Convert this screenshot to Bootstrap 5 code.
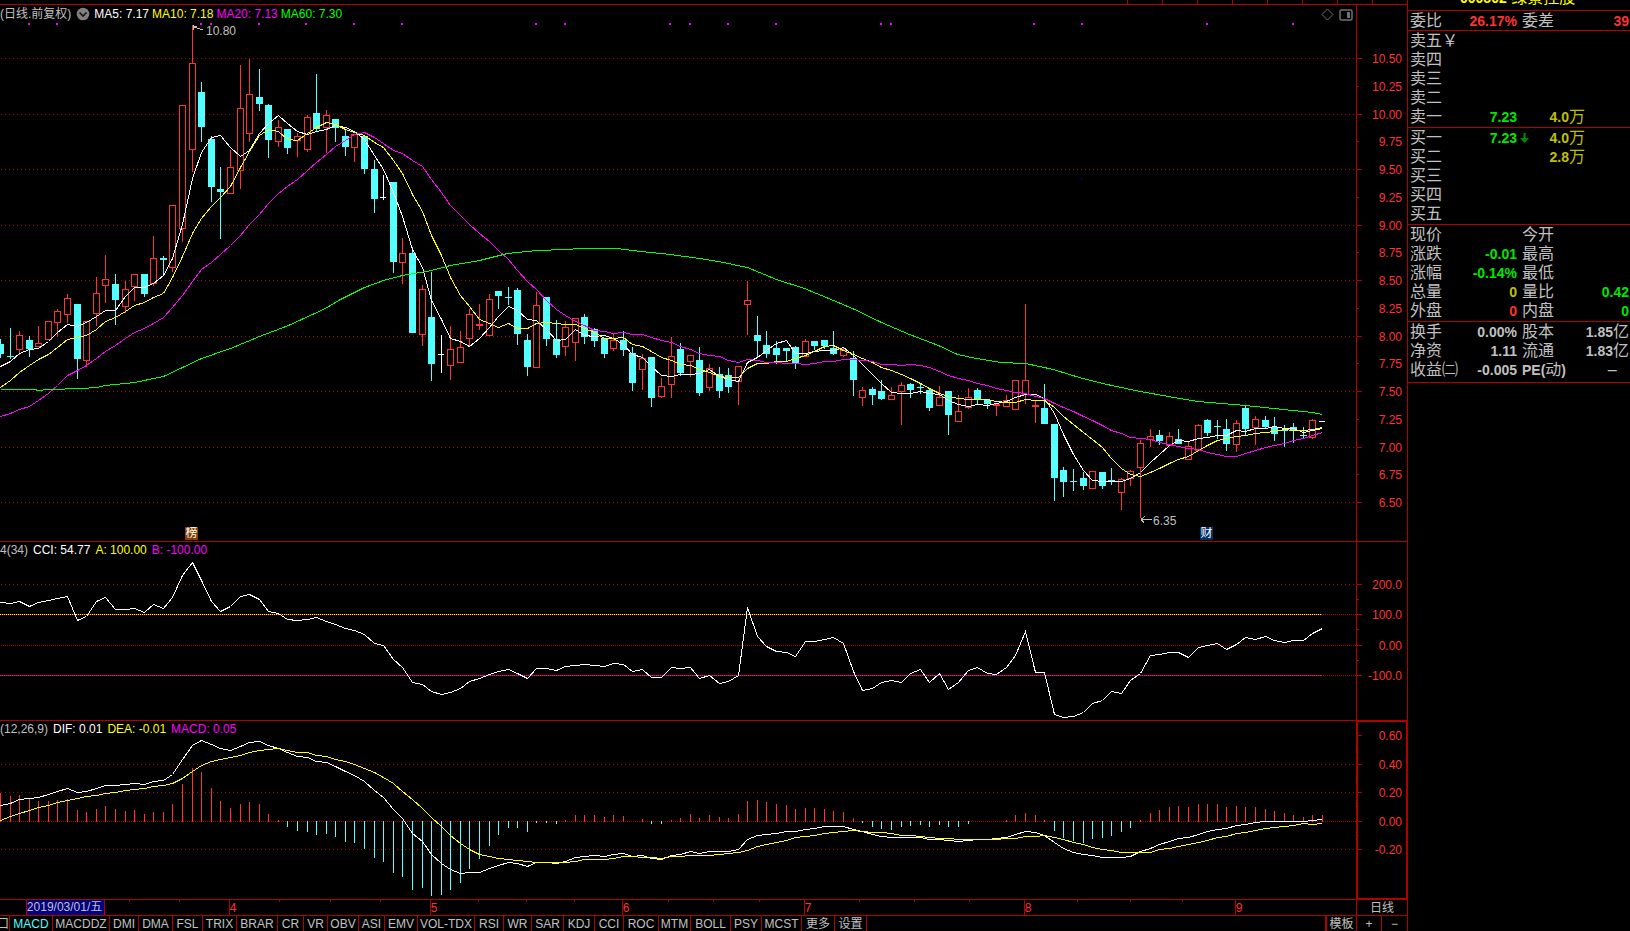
<!DOCTYPE html>
<html lang="zh-CN" data-bs-theme="dark">
<head>
<meta charset="utf-8">
<meta name="viewport" content="width=device-width, initial-scale=1">
<title>000502 绿景控股 日线</title>
<link href="https://cdn.jsdelivr.net/npm/bootstrap@5.3.0/dist/css/bootstrap.min.css" rel="stylesheet">
<style>
:root{--rule:#b00000;--up:#ff3232;--down:#54ffff;--ink:#c0c0c0}
body{background:#000;color:var(--ink);font:12px/16px "Liberation Sans","Noto Sans CJK SC",sans-serif}
.c-up{color:var(--up)}.c-green{color:#00e600}.c-vol{color:#c0c000}
.c-y{color:#ff0}.c-m{color:#f0f}.c-g{color:#0f0}
.desk{border-right:1px solid var(--rule);display:grid;grid-template-rows:4px minmax(0,537fr) minmax(0,179fr) minmax(0,179fr) 16px 16px}
.desk>div{border-top:1px solid var(--rule);min-height:0}
.desk>.topstrip{border:0}
.topstrip i{width:35px;border-left:1px solid var(--rule)}
.plot{min-width:0;overflow:hidden}
.plot svg{position:absolute;inset:0;width:100%;height:100%}
.legend{position:absolute;left:0;top:0;z-index:2;white-space:nowrap;line-height:16px;gap:5px}
.legend.tall{line-height:18px;gap:3px}
.tools{position:absolute;right:3px;top:3px;z-index:2;gap:5px}
.tools button,.fold{border:0;background:none;padding:0;line-height:0}
.fold{margin:0 1px 0 2px}
.note,.flag{position:absolute;z-index:2;line-height:14px}
.flag{width:13px;height:13px;line-height:12px;color:#fff;text-align:center;overflow:hidden}
.flag-rank{background:#804000}.flag-fin{background:#003068}
.scale{width:51px;flex:none;border-left:1px solid var(--rule);color:var(--up)}
.scale span{display:block;height:16px;line-height:16px;padding-right:5px;text-align:right;position:relative}
.scale span::before{content:"";position:absolute;left:0;top:7px;width:5px;height:1px;background:var(--rule)}
.scale .minor::before{width:2px}
.scale-main{padding:46px 0 30px}
.scale-cci{padding:39px 0 40px}
.scale-macd{padding:11px 0 45px;box-shadow:inset 0 0 0 1px var(--rule)}
.scale-cci span,.scale-macd span{margin:-4px 0}
.months span{position:relative;z-index:1;border-left:1px solid var(--rule);color:var(--up);line-height:16px;flex-basis:0;min-width:0;white-space:nowrap}
.months span:first-of-type{border:0}
.months mark{position:absolute;left:0;top:0;padding:0;background:#000080;color:var(--ink);line-height:15px;height:15px;border-right:1px solid var(--rule);width:78px}
.tabs{display:grid;grid-template-columns:10px 43px 57px 29px 34px 30px 34px 41px 26px 24px 31px 26px 33px 57px 29px 28px 32px 31px 29px 35px 32px 40px 31px 40px 33px 32px 1fr 32px 25px 25px}
.tabs button{border:0;border-right:1px solid var(--rule);background:none;color:var(--ink);padding:0;line-height:16px;height:15px;white-space:nowrap;overflow:hidden;min-width:0}
.tabs button.on{color:var(--down)}
.tabs .clip{direction:rtl}
.tabs .tpl{border-left:2px solid var(--rule)}
.tabs button:last-child{border-right:0}
.side{width:222px;flex:none;overflow:hidden}
.side h1{height:10px;margin:0;padding-left:52px;font-size:16px;line-height:16px;overflow:hidden;color:#ff0;display:flex;align-items:flex-end;font-weight:400;white-space:nowrap}
.side h1 span{display:block;margin-bottom:4px}
.side b{font-size:14px;line-height:0}
.side section{border-top:1px solid var(--rule);padding-left:2px}
.side .book,.side .facts{padding-bottom:1px}
.side .last{padding-bottom:3px;border-bottom:1px solid var(--rule)}
.quote{width:100%;table-layout:fixed;border-collapse:collapse;font-size:16px}
.quote th,.quote td{height:19px;padding:0;line-height:19px;font-weight:400;white-space:nowrap;vertical-align:top}
.quote td{text-align:right}
.quote .second{padding-left:5px}
.quote td:last-child{padding-right:1px}
.quote svg{margin-top:5px}
.w-label{width:50px}.w-val{width:57px}.w-second{width:53px}.w-arrow{width:14px}.w-vol{width:54px}
</style>
</head>
<body>
<div class="d-flex vh-100 overflow-hidden">
  <main class="desk flex-grow-1">
    <div class="topstrip d-flex justify-content-end"><i></i><i></i><i></i><i></i><i></i><i></i><i></i><i></i></div>

    <div class="d-flex">
      <div class="plot position-relative flex-grow-1" id="price">
        <div class="legend tall d-flex align-items-center">
          <span>(日线.前复权)</span>
          <button class="fold" aria-label="折叠"><svg class="position-static" style="width:14px;height:14px" viewBox="0 0 14 14"><circle cx="7" cy="7" r="6.3" fill="#808080"/><path d="M3.5 5.5 7 9l3.5-3.5" fill="none" stroke="#111" stroke-width="1.6"/></svg></button>
          <span class="text-white">MA5: 7.17</span><span class="c-y">MA10: 7.18</span><span class="c-m">MA20: 7.13</span><span class="c-g">MA60: 7.30</span>
        </div>
        <div class="tools d-flex">
          <button aria-label="标记"><svg class="position-static" style="width:13px;height:13px" viewBox="0 0 13 13"><path d="M6.500 1 12 6.500 6.500 12 1 6.500Z" fill="none" stroke="#707070"/></svg></button>
          <button aria-label="侧栏"><svg class="position-static" style="width:14px;height:12px" viewBox="0 0 14 12"><rect x="1" y="1" width="12" height="10" rx="1.500" fill="none" stroke="#707070" stroke-width="1.500"/><path d="M8 3h3v6H8z" fill="#707070"/></svg></button>
        </div>
      </div>
      <div class="scale scale-main d-flex flex-column justify-content-between" id="scale"></div>
    </div>

    <div class="d-flex">
      <div class="plot position-relative flex-grow-1" id="cci">
        <div class="legend d-flex"><span>4(34)</span><span class="text-white">CCI: 54.77</span><span class="c-y">A: 100.00</span><span class="c-m">B: -100.00</span></div>
      </div>
      <div class="scale scale-cci d-flex flex-column justify-content-between">
        <span>200.0</span><span class="minor"></span><span>100.0</span><span class="minor"></span><span>0.00</span><span class="minor"></span><span>-100.0</span>
      </div>
    </div>

    <div class="d-flex">
      <div class="plot position-relative flex-grow-1" id="macd">
        <div class="legend d-flex"><span>(12,26,9)</span><span class="text-white">DIF: 0.01</span><span class="c-y">DEA: -0.01</span><span class="c-m">MACD: 0.05</span></div>
      </div>
      <div class="scale scale-macd d-flex flex-column justify-content-between">
        <span>0.60</span><span class="minor"></span><span>0.40</span><span class="minor"></span><span>0.20</span><span class="minor"></span><span>0.00</span><span class="minor"></span><span>-0.20</span>
      </div>
    </div>

    <div class="d-flex">
      <div class="plot months position-relative flex-grow-1 d-flex" id="months"></div>
      <div class="scale text-center" style="color:var(--ink)">日线</div>
    </div>

    <div class="tabs" id="tabs"></div>
  </main>

  <aside class="side">
    <h1><span><b>000502</b> 绿景控股</span></h1>
    <section>
      <table class="quote"><colgroup><col class="w-label"><col class="w-val"><col class="w-second"><col></colgroup>
        <tr><th>委比</th><td class="c-up"><b>26.17%</b></td><th class="second">委差</th><td class="c-up"><b>39</b></td></tr>
      </table>
    </section>
    <section class="book">
      <table class="quote"><colgroup><col class="w-label"><col class="w-val"><col class="w-arrow"><col class="w-vol"><col></colgroup>
        <tr><th>卖五￥</th><td></td><td></td><td></td><td></td></tr>
        <tr><th>卖四</th><td></td><td></td><td></td><td></td></tr>
        <tr><th>卖三</th><td></td><td></td><td></td><td></td></tr>
        <tr><th>卖二</th><td></td><td></td><td></td><td></td></tr>
        <tr><th>卖一</th><td class="c-green"><b>7.23</b></td><td></td><td class="c-vol"><b>4.0</b>万</td><td></td></tr>
      </table>
    </section>
    <section class="book">
      <table class="quote"><colgroup><col class="w-label"><col class="w-val"><col class="w-arrow"><col class="w-vol"><col></colgroup>
        <tr><th>买一</th><td class="c-green"><b>7.23</b></td><td><svg class="d-block mx-auto" width="9" height="10" viewBox="0 0 9 10"><path d="M3.500 0h2v5H9L4.500 10 0 5h3.500z" fill="#008a00"/></svg></td><td class="c-vol"><b>4.0</b>万</td><td></td></tr>
        <tr><th>买二</th><td></td><td></td><td class="c-vol"><b>2.8</b>万</td><td></td></tr>
        <tr><th>买三</th><td></td><td></td><td></td><td></td></tr>
        <tr><th>买四</th><td></td><td></td><td></td><td></td></tr>
        <tr><th>买五</th><td></td><td></td><td></td><td></td></tr>
      </table>
    </section>
    <section class="facts">
      <table class="quote"><colgroup><col class="w-label"><col class="w-val"><col class="w-second"><col></colgroup>
        <tr><th>现价</th><td></td><th class="second">今开</th><td></td></tr>
        <tr><th>涨跌</th><td class="c-green"><b>-0.01</b></td><th class="second">最高</th><td></td></tr>
        <tr><th>涨幅</th><td class="c-green"><b>-0.14%</b></td><th class="second">最低</th><td></td></tr>
        <tr><th>总量</th><td class="c-vol"><b>0</b></td><th class="second">量比</th><td class="c-green"><b>0.42</b></td></tr>
        <tr><th>外盘</th><td class="c-up"><b>0</b></td><th class="second">内盘</th><td class="c-green"><b>0</b></td></tr>
      </table>
    </section>
    <section class="last">
      <table class="quote"><colgroup><col class="w-label"><col class="w-val"><col class="w-second"><col></colgroup>
        <tr><th>换手</th><td><b>0.00%</b></td><th class="second">股本</th><td><b>1.85</b>亿</td></tr>
        <tr><th>净资</th><td><b>1.11</b></td><th class="second">流通</th><td><b>1.83</b>亿</td></tr>
        <tr><th>收益㈡</th><td><b>-0.005</b></td><th class="second"><b>PE(</b>动<b>)</b></th><td><span class="me-2">–</span>&nbsp;</td></tr>
      </table>
    </section>
  </aside>
</div>
<script src="https://cdn.jsdelivr.net/npm/bootstrap@5.3.0/dist/js/bootstrap.bundle.min.js"></script>
<script>
// Each bar: direction (r up, c down, w flat), high, low, body top, body bottom.
const bars = `c339 358 344 354|c328 359 356 357|r331 355 335 349|c336 357 340 349|r326 346 343 346|r321 339 321 339|r309 337 311 322|r294 323 298 314|c304 379 304 359|r321 367 321 360
r277 326 293 313|r255 303 279 285|c274 325 284 300|r281 313 289 306|r274 301 274 286|c274 297 274 294|r236 286 258 283|c256 276 258 260|r205 272 205 267|r105 242 105 228
r25 172 63 149|c82 142 92 127|c136 202 139 187|c167 239 189 192|r150 193 167 193|r65 189 108 170|r59 142 94 133|c69 111 97 104|c104 158 105 140|r120 147 127 141
c129 154 129 148|r133 157 136 140|r115 152 117 149|c74 132 113 129|r110 153 115 127|c119 142 119 128|c130 156 136 147|r134 162 134 147|c135 174 136 169|c160 213 169 199
w175 200 197 197|c182 273 182 262|r238 284 253 262|c247 333 253 333|r285 346 289 334|c272 381 317 364|w335 373 354 354|r326 380 349 365|r331 362 347 362|r309 347 314 338
r304 330 324 325|r294 335 299 335|c291 309 291 296|c287 305 297 298|c288 345 290 334|c334 376 340 367|r292 367 305 367|c297 346 297 339|c320 358 339 355|r321 356 327 346
r318 361 318 342|c314 344 317 337|c328 347 329 341|c338 358 338 354|r334 351 340 348|c331 356 340 350|c347 391 353 383|r354 390 358 369|c357 407 357 398|r378 398 386 396
r337 398 356 384|c343 376 349 373|r355 377 355 361|c347 396 360 393|r364 391 368 387|c367 398 374 391|c368 393 375 387|r366 405 366 381|r281 335 300 304|c316 357 335 341
c331 358 345 354|c341 364 348 355|c348 362 348 351|c346 369 347 364|r339 356 341 356|c341 350 341 346|c340 349 340 346|c331 355 348 354|r347 357 350 355|c351 396 358 380
r387 406 390 397|c387 405 389 395|c380 400 391 399|r387 399 395 399|r382 425 385 391|c383 398 384 390|c383 394 387 388|c388 411 390 408|r386 405 397 405|c391 435 391 415
r395 421 411 421|r388 409 397 407|c388 404 390 399|c400 409 400 404|r404 416 404 405|r395 407 400 406|r380 409 380 409|r304 404 380 394|r401 423 405 406|c384 424 408 424
c424 501 424 478|c467 497 470 482|c469 491 481 482|c472 490 478 486|r471 488 471 488|c472 489 472 486|c468 485 480 482|r478 510 479 492|r470 486 471 478|r440 518 443 467
r429 447 436 439|c430 445 435 441|r432 446 436 445|c429 444 439 444|r442 459 446 459|r424 450 425 450|c419 436 420 433|c420 439 426 427|c419 451 429 444|r420 452 423 444
c406 435 408 429|r416 445 419 427|c416 429 420 427|c417 441 427 434|c425 447 430 431|c423 443 427 430|c427 439 435 436|r419 439 420 437|w421 422 421 421`
  .split(/[|\n]/).map(s => [s.trim()[0], ...s.trim().slice(1).split(' ').map(Number)]);
const nums = s => s.split(' ').map(Number);
const lead5 = nums('366 361 353 349');
const lead10 = nums('387 380 372 365 359 354 347 339 337');
const lead20 = nums('416 413 409 406 400 393 385 375 370 365 358 351 345 338 332 328 323 317 307');
const ma60 = nums('0 389 34 389 38 390 48 389 82 388 96 387 105 385 134 382 163 376 201 358 230 348 259 336 288 325 325 308 340 299 364 287 383 280 402 275 431 270 450 265 479 260 507 253 536 250 565 249 580 248 617 248 640 251 670 254 699 258 718 261 747 267 776 279 804 288 833 300 852 308 881 322 909 334 938 345 957 354 976 358 1000 362 1025 363 1053 369 1082 378 1111 385 1140 391 1168 396 1197 401 1245 405 1283 409 1312 412 1322 414');
const cci = nums('187 190 182 199 186 179 175 167 241 229 184 172 208 208 203 215 193 205 172 104 65 120 184 213 197 167 163 176 214 220 236 241 236 232 243 253 265 269 283 310 315 357 382 426 431 454 463 455 445 422 415 402 392 386 399 413 383 383 391 379 376 373 376 379 370 373 394 388 411 411 382 385 382 414 406 430 422 404 200 288 319 334 335 349 304 304 296 292 309 392 451 445 427 419 427 398 388 427 398 448 427 389 382 398 403 382 346 274 397 397 523 532 527 517 488 479 454 458 421 400 346 343 337 337 352 322 314 310 328 312 291 296 289 301 307 301 301 278 265');
const hist = nums('759 768 765 775 783 783 780 777 810 816 807 798 807 813 810 822 816 816 792 732 685 696 744 783 804 792 786 792 822 840 860 873 876 885 882 891 906 909 927 954 966 999 1011 1050 1044 1068 1065 1050 1029 987 957 918 885 864 864 876 849 849 852 840 825 825 825 831 825 828 843 837 852 852 840 834 822 834 825 831 834 822 783 780 786 792 795 807 804 804 807 813 816 834 849 861 867 870 861 858 855 861 855 861 861 852 844 844 843 840 825 819 825 840 873 894 903 909 897 894 888 877 864 840 819 810 801 798 801 792 792 792 801 798 801 801 807 813 819 825 831 825 825');
const dif = nums('796 790 778 775 771 763 754 745 757 753 745 736 736 733 730 733 724 720 703 658 614 601 613 625 631 618 607 604 616 623 637 649 652 664 667 679 693 704 724 751 772 806 835 880 904 943 968 987 1000 997 997 984 975 967 970 979 967 967 970 964 952 948 946 949 943 940 948 946 954 958 946 943 934 940 934 934 934 926 898 886 883 880 874 873 868 864 859 859 859 866 874 883 888 892 892 892 892 898 898 901 904 901 898 896 895 892 883 874 877 884 905 923 935 943 946 952 952 952 947 934 923 911 903 895 890 881 873 866 865 856 853 847 844 844 844 844 843 841 838');
const X = i => Math.floor(.5 + 9.58 * i);
const closes = bars.map(b => b[0] === 'c' ? b[4] : b[3]);
const average = (n, lead) => closes.map((_, i) => i < lead.length ? lead[i] : closes.slice(i - n + 1, i + 1).reduce((a, b) => a + b) / n);
const third = v => 540 + v / 3;

const rect = (x, y, w, h, c) => `<rect x="${x}" y="${y}" width="${w}" height="${h}" fill="${c}"/>`;
const poly = (pts, c) => `<polyline points="${pts.map(p => (p[0] + .5) + ',' + (Math.round(p[1]) + .5)).join(' ')}" fill="none" stroke="${c}"/>`;
const line = (ys, c) => poly(ys.map((y, i) => [X(i), y]), c);
const dots = (y, gap, c = '#b00000', w = 1356, start = 1) => `<path d="M${start} ${y + .5}H${w}" stroke="${c}" stroke-dasharray="1 ${gap - 1}"/>`;
const draw = (id, box, body) => document.getElementById(id).insertAdjacentHTML('afterbegin',
  `<svg viewBox="${box}" preserveAspectRatio="none" shape-rendering="crispEdges" aria-hidden="true">${body}</svg>`);

// Price panel
let p = [58, 114, 169, 225, 280, 336, 391, 447, 502].map(y => dots(y, 4)).join('');
p += [28, 56, 200, 210, 258, 305, 353, 401, 535, 564, 669, 689, 727, 775, 880, 890, 1033, 1081, 1206, 1292].map(x => rect(x, 23, 2, 2, '#f0f')).join('');
bars.forEach(([d, hi, lo, top, bot], i) => {
  const x = X(i), c = d === 'r' ? '#ff3232' : d === 'c' ? '#54ffff' : '#fff';
  p += rect(x, hi, 1, lo - hi, c);
  if (d === 'w') p += rect(x - 3, top, 6, 1, c);
  else if (d === 'c') p += rect(x - 3, top, 7, bot - top, c);
  else p += `<rect x="${x - 2.5}" y="${top + .5}" width="6" height="${Math.max(bot - top, 1)}" fill="#000" stroke="${c}"/>`;
});
p += line(average(5, lead5), '#fff') + line(average(10, lead10), '#ff0') + line(average(20, lead20), '#f0f');
const long = []; for (let i = 0; i < ma60.length; i += 2) long.push([ma60[i], ma60[i + 1]]);
p += poly(long, '#0f0') + rect(1081, 178, 1, 2, '#00a');
p += '<path d="M193 26.500h4M193.500 25v5M194 27l9 3" stroke="#c0c0c0" fill="none"/><path d="M1141 519.500h11M1141 519.500l4-3M1141 519.500l3 3" stroke="#c0c0c0" fill="none"/>';
draw('price', '0 5 1356 536', p);

// Labels pinned to points of the price chart
[['note', 206, 24, '10.80'], ['note', 1153, 514, '6.35'], ['flag flag-rank', 185, 527, '榜'], ['flag flag-fin', 1200, 527, '财']].forEach(([k, x, y, t]) =>
  document.getElementById('price').insertAdjacentHTML('beforeend', `<span class="${k}" style="left:${x / 13.56}%;top:${(y - 5) / 5.36}%">${t}</span>`));

// Price scale
let s = '';
for (let v = 1050; v >= 650; v -= 25) s += `<span class="${v % 50 ? 'minor' : ''}">${(v / 100).toFixed(2)}</span>`;
document.getElementById('scale').innerHTML = s;

// CCI panel
draw('cci', '0 542 1356 178', dots(584, 4) + [614, 645, 675].map(y => dots(y, 2)).join('') +
  dots(614, 2, '#ff0', 1322, 0) + dots(675, 2, '#f0f', 1322, 0) + line(cci.map(third), '#fff'));

// MACD panel
let m = [764, 792, 849].map(y => dots(y, 4)).join('') + dots(821, 2);
hist.forEach((v, i) => { const y = Math.round(third(v)); m += y < 821 ? rect(X(i), y, 1, 822 - y, '#ff3232') : rect(X(i), 821, 1, y - 821, '#54ffff'); });
m += line(dif.map(third), '#fff') + line(dif.map((v, i) => third(v + (844 - hist[i]) / 2)), '#ff0');
draw('macd', '0 721 1356 178', m);

// Date row
const starts = [0, 26, 229, 430, 622, 804, 1024, 1235, 1356], names = ['', '', '4', '5', '6', '7', '8', '9'];
document.getElementById('months').innerHTML = names.map((n, i) =>
  `<span style="flex-grow:${starts[i + 1] - starts[i]}">${i === 1 ? '<mark>2019/03/01/五</mark>' : n}</span>`).join('');
draw('months', '0 0 1356 15', [129, 179, 279, 330, 380, 478, 526, 574, 668, 713, 759, 859, 914, 969, 1077, 1130, 1182].map(x => rect(x, 0, 1, 2, '#b00000')).join(''));

// Indicator tabs
const tabs = '口 MACD MACDDZ DMI DMA FSL TRIX BRAR CR VR OBV ASI EMV VOL-TDX RSI WR SAR KDJ CCI ROC MTM BOLL PSY MCST 更多 设置'.split(' ');
document.getElementById('tabs').innerHTML = tabs.map((t, i) => `<button class="${i === 1 ? 'on' : i ? '' : 'clip'}">${t}</button>`).join('') +
  '<span></span><button class="tpl">模板</button><button>+</button><button>−</button>';
</script>
</body>
</html>
